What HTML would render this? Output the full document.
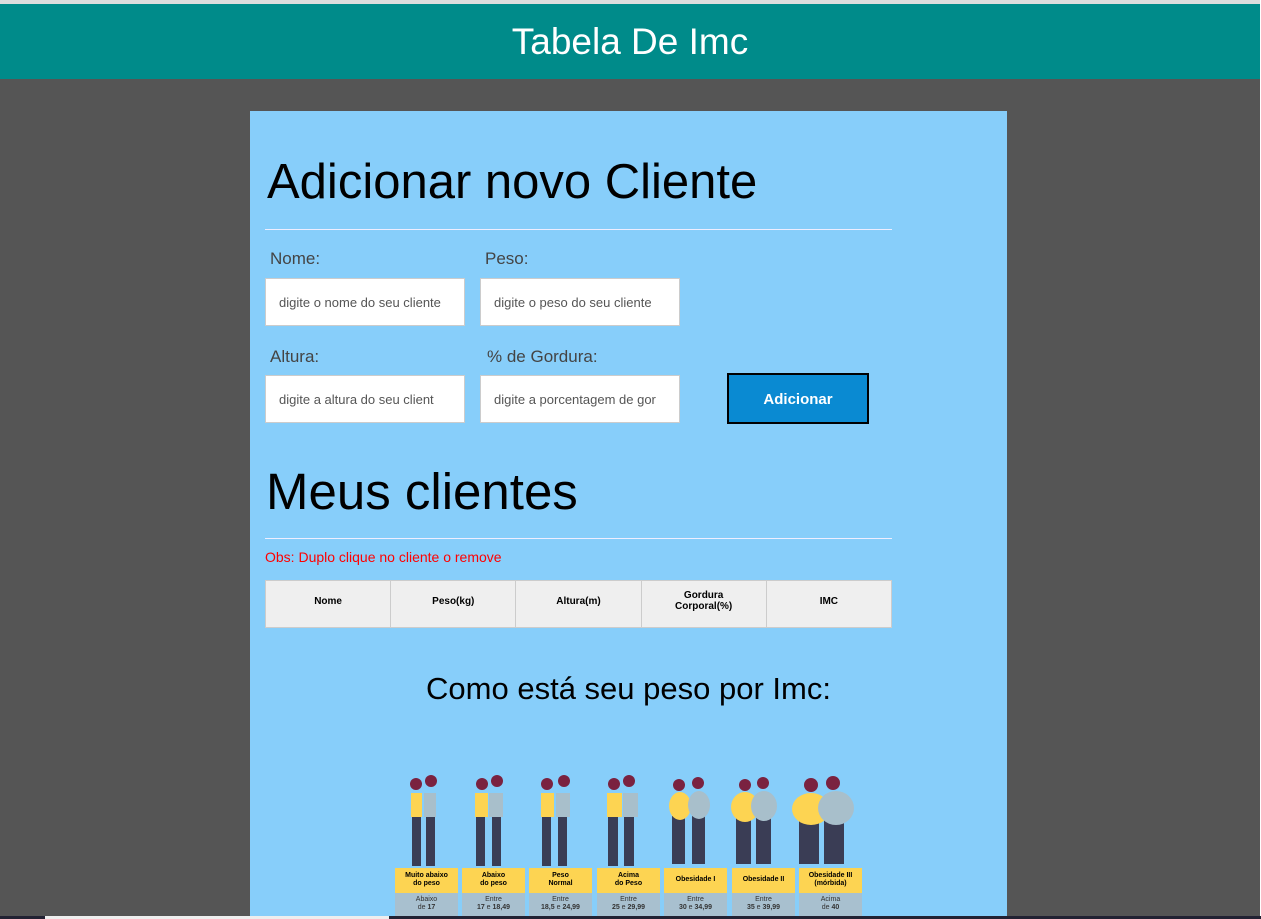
<!DOCTYPE html>
<html><head><meta charset="utf-8"><style>
*{margin:0;padding:0;box-sizing:border-box}
body{width:1261px;height:919px;background:#555;font-family:"Liberation Sans",sans-serif;position:relative;overflow:hidden}
.top{position:absolute;left:0;top:0;width:1261px;height:4px;background:#ddd}
header{position:absolute;left:0;top:4px;width:1260px;height:75px;background:#008B8A;color:#fff;font-size:37px;text-align:center;line-height:75px}
.rs{position:absolute;left:1260px;top:0;width:1px;height:919px;background:#fff}
.panel{position:absolute;left:250px;top:111px;width:757px;height:808px;background:#87CEFA}
.a{position:absolute}
h1{position:absolute;font-weight:normal;font-size:49px;color:#000;white-space:nowrap}
.hr{position:absolute;left:15px;width:627px;height:1px;background:#eef}
.lbl{position:absolute;font-size:17px;color:#444}
.in{position:absolute;width:200px;height:48px;background:#fff;border:1px solid #ccc;font-size:13px;color:#555;padding-left:13px;line-height:48px;white-space:nowrap;overflow:hidden}
.btn{position:absolute;left:477px;top:262px;width:142px;height:51px;background:#0A8AD2;border:2px solid #000;color:#fff;font-weight:bold;font-size:15px;text-align:center;line-height:49px}
table{position:absolute;left:15px;top:469px;border-collapse:collapse;width:627px}
td{border:1px solid #ccc;background:#efefef;width:125px;height:47px;text-align:center;font-size:10px;font-weight:bold;vertical-align:middle;padding-bottom:6px;line-height:11px}
.col{position:absolute;top:757px;width:63px;height:48px}
.ye{height:25px;background:#FDD452;font-size:7px;font-weight:bold;text-align:center;line-height:8px;padding-top:4px}
.gr{height:23px;background:#A8C0CF;font-size:7px;text-align:center;line-height:8px;padding-top:3px;color:#333}
</style></head><body>
<div class="top"></div>
<header>Tabela De Imc</header>
<div class="rs"></div>
<div class="panel">
<h1 style="left:17px;top:43px">Adicionar novo Cliente</h1>
<div class="hr" style="top:118px"></div>
<div class="lbl" style="left:20px;top:138px">Nome:</div>
<div class="lbl" style="left:235px;top:138px">Peso:</div>
<div class="in" style="left:15px;top:167px">digite o nome do seu cliente</div>
<div class="in" style="left:230px;top:167px">digite o peso do seu cliente</div>
<div class="lbl" style="left:20px;top:236px">Altura:</div>
<div class="lbl" style="left:237px;top:236px">% de Gordura:</div>
<div class="in" style="left:15px;top:264px">digite a altura do seu client</div>
<div class="in" style="left:230px;top:264px">digite a porcentagem de gor</div>
<div class="btn">Adicionar</div>
<h1 style="left:16px;top:351px;font-size:51px">Meus clientes</h1>
<div class="hr" style="top:427px"></div>
<div class="a" style="left:15px;top:438px;font-size:14px;color:#f00">Obs: Duplo clique no cliente o remove</div>
<table><tr><td>Nome</td><td>Peso(kg)</td><td>Altura(m)</td><td>Gordura<br>Corporal(%)</td><td>IMC</td></tr></table>
<div class="a" style="left:0;width:757px;top:560px;text-align:center;font-size:31px;color:#000">Como está seu peso por Imc:</div>
<svg class="a" style="left:144px;top:660px" width="470" height="100">
<g fill="#3A3D55">
<rect x="18" y="45" width="9" height="50"/><rect x="32" y="45" width="9" height="50"/>
<rect x="82" y="45" width="9" height="50"/><rect x="98" y="45" width="9" height="50"/>
<rect x="148" y="45" width="9" height="50"/><rect x="164" y="45" width="9" height="50"/>
<rect x="214" y="45" width="10" height="50"/><rect x="230" y="45" width="10" height="50"/>
<rect x="278" y="45" width="13" height="48"/><rect x="298" y="45" width="13" height="48"/>
<rect x="342" y="45" width="15" height="48"/><rect x="362" y="45" width="15" height="48"/>
<rect x="405" y="45" width="20" height="48"/><rect x="430" y="45" width="20" height="48"/>
</g>
<g fill="#FDD452">
<rect x="17" y="22" width="11" height="24"/><rect x="81" y="22" width="13" height="24"/><rect x="147" y="22" width="13" height="24"/><rect x="213" y="22" width="15" height="24"/>
<ellipse cx="286" cy="35" rx="11" ry="14"/><ellipse cx="351" cy="36" rx="14" ry="15"/><ellipse cx="417" cy="38" rx="19" ry="16"/>
</g>
<g fill="#A8BFCB">
<rect x="30" y="22" width="12" height="24"/><rect x="95" y="22" width="14" height="24"/><rect x="162" y="22" width="14" height="24"/><rect x="229" y="22" width="15" height="24"/>
<ellipse cx="305" cy="34" rx="11" ry="14"/><ellipse cx="370" cy="35" rx="13" ry="15"/><ellipse cx="442" cy="37" rx="18" ry="17"/>
</g>
<g fill="#7A2240">
<circle cx="22" cy="13" r="6"/><circle cx="37" cy="10" r="6"/><circle cx="88" cy="13" r="6"/><circle cx="103" cy="10" r="6"/>
<circle cx="153" cy="13" r="6"/><circle cx="170" cy="10" r="6"/><circle cx="220" cy="13" r="6"/><circle cx="235" cy="10" r="6"/>
<circle cx="285" cy="14" r="6"/><circle cx="304" cy="12" r="6"/><circle cx="351" cy="14" r="6"/><circle cx="369" cy="12" r="6"/>
<circle cx="417" cy="14" r="7"/><circle cx="439" cy="12" r="7"/>
</g>
</svg>
<div class="col" style="left:145px"><div class="ye">Muito abaixo<br>do peso</div><div class="gr">Abaixo<br>de <b>17</b></div></div>
<div class="col" style="left:212px"><div class="ye">Abaixo<br>do peso</div><div class="gr">Entre<br><b>17</b> e <b>18,49</b></div></div>
<div class="col" style="left:279px"><div class="ye">Peso<br>Normal</div><div class="gr">Entre<br><b>18,5</b> e <b>24,99</b></div></div>
<div class="col" style="left:347px"><div class="ye">Acima<br>do Peso</div><div class="gr">Entre<br><b>25</b> e <b>29,99</b></div></div>
<div class="col" style="left:414px"><div class="ye" style="padding-top:8px">Obesidade I</div><div class="gr">Entre<br><b>30</b> e <b>34,99</b></div></div>
<div class="col" style="left:482px"><div class="ye" style="padding-top:8px">Obesidade II</div><div class="gr">Entre<br><b>35</b> e <b>39,99</b></div></div>
<div class="col" style="left:549px"><div class="ye">Obesidade III<br>(mórbida)</div><div class="gr">Acima<br>de <b>40</b></div></div>
</div>
<div class="a" style="left:0;top:916px;width:1261px;height:3px;background:#223"></div>
<div class="a" style="left:45px;top:916px;width:344px;height:3px;background:#eee"></div>
</body></html>
